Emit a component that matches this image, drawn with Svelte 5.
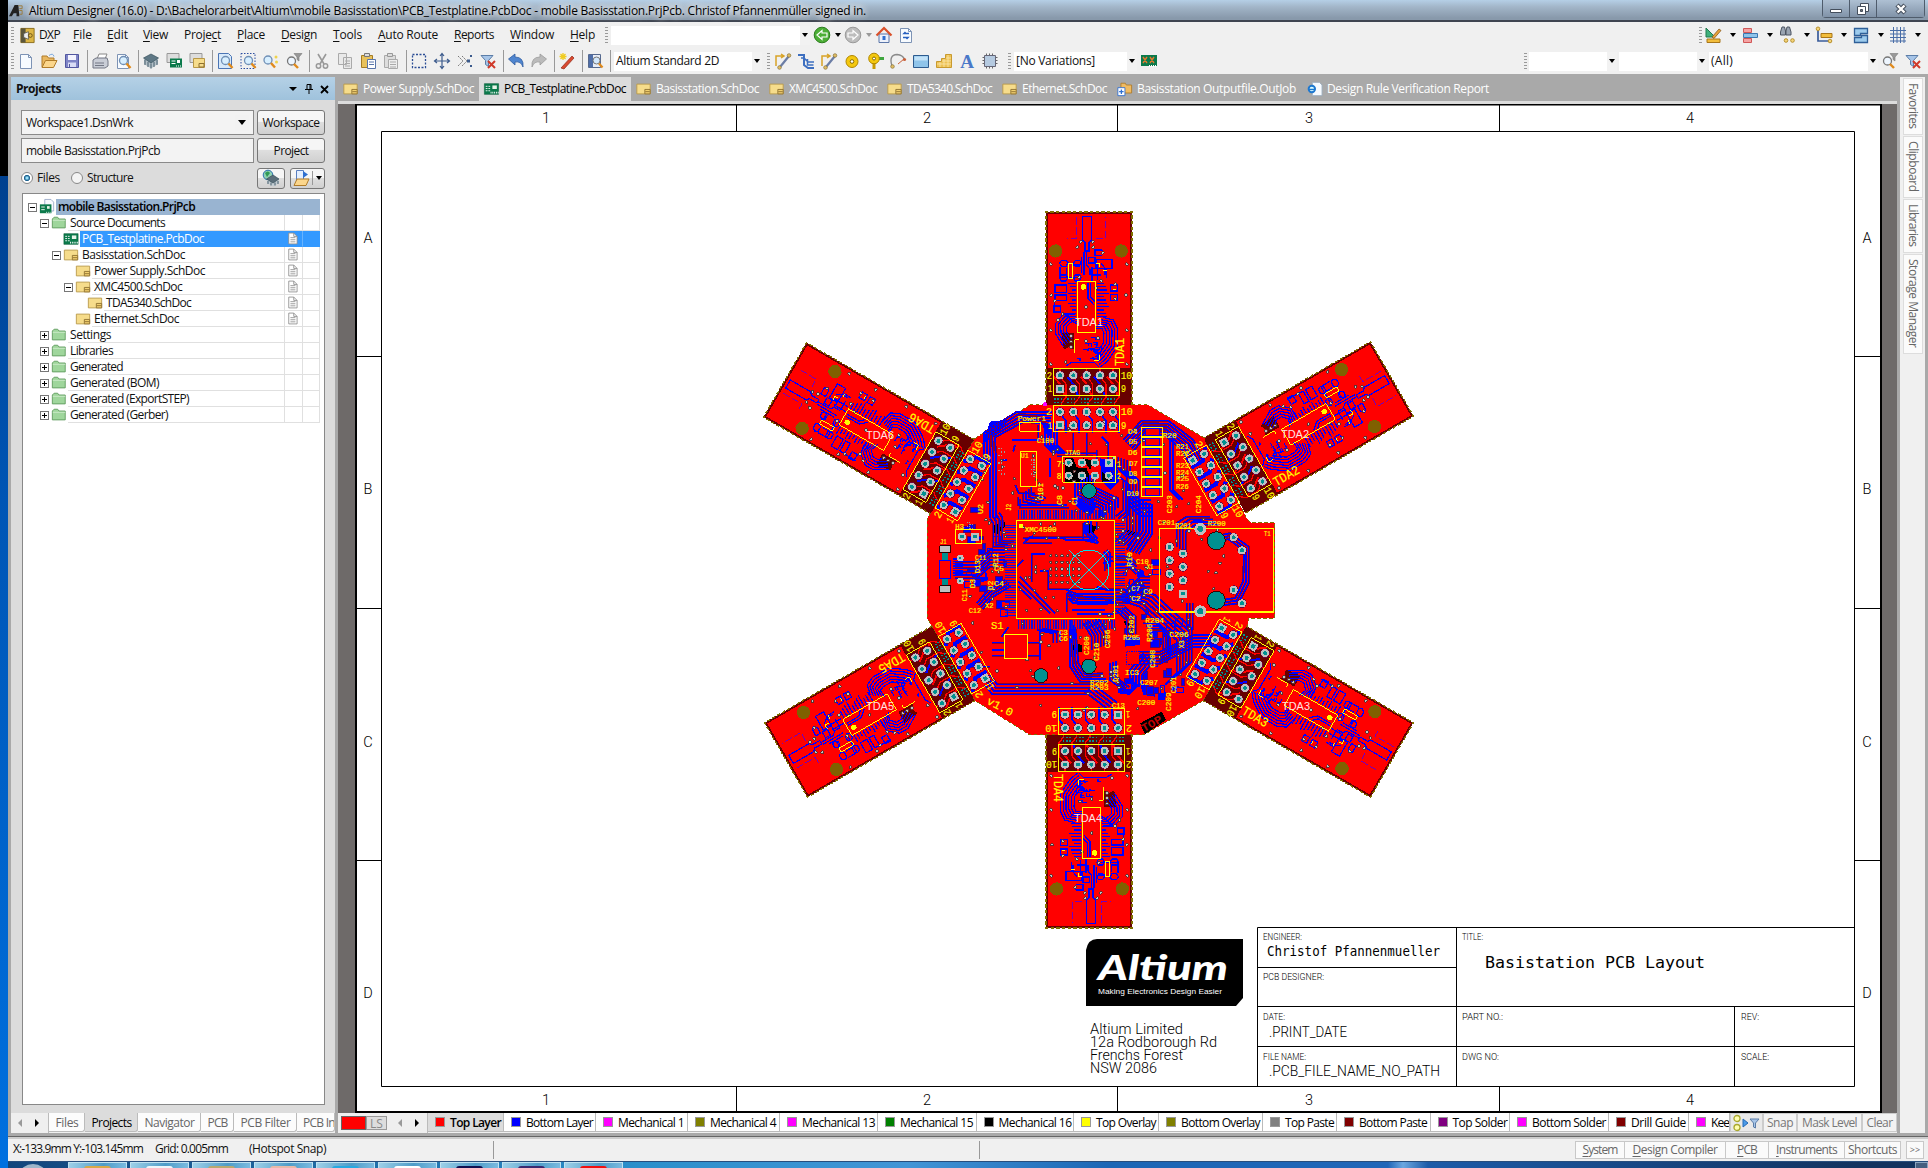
<script>
  // Spreads a label over a given width by adjusting its letter spacing.
  function fit(node, width) {
    if (!width) return;
    const natural = node.getBoundingClientRect().width;
    const count = Math.max(1, node.textContent.trim().length);
    node.style.letterSpacing = `${(width - natural) / count}px`;
  }

  const sch = '<path d="M1.500 3.500h15v11h-15z" fill="#f6dc8b" stroke="#b89848"/><path d="M10.500 9.500h6v5h-6zM11 12h5" fill="#f1d070" stroke="#8d7030"/>';
  const pcb = '<path d="M1 3h16v12H1z" fill="#0b7a4b" stroke="#055b36" stroke-width=".6"/><path d="M2.500 6h5M2.500 8.500h5M2.500 11h5" stroke="#fff" stroke-dasharray="2 1"/><path d="M10 5h5v4h-5z" fill="#e8f4e8"/><path d="M8 13h9" stroke="#fff" stroke-width="2" stroke-dasharray="1 1"/>';
  const page = '<path d="M3.500 2.500h8l3 3v11h-11z" fill="#f7fbff" stroke="#7d93b5"/><path d="M11.500 2.500v3h3" fill="none" stroke="#7d93b5"/>';
  const lens = '<circle cx="9.500" cy="8.500" r="4" fill="#d8efff" stroke="#6f8fb5" stroke-width="1.300"/><path d="M12.500 11.500l4 4.500" stroke="#e08a1c" stroke-width="2.400"/>';
  const funnel = '<path d="M9 1.500h8l-3 3.500v4l-2-1.500V5z" fill="#999" stroke="#777" stroke-width=".6"/>';
  const track = '<path d="M2 14V4h7M7 2l3 2-3 2" fill="none" stroke="#d8a326" stroke-width="1.500"/><path d="M6 15L15 4" stroke="#6b7da5" stroke-width="2.200"/><circle cx="15" cy="3.500" r="1.800" fill="#e0bd62" stroke="#88713a" stroke-width=".7"/><circle cx="5.500" cy="15.500" r="1.800" fill="#e0bd62" stroke="#88713a" stroke-width=".7"/>';
  const blueFunnel = '<path d="M2 3.500h12l-4.500 5v6l-3-2v-4z" fill="#a7c5e8" stroke="#5b7da8"/>';

  const icons = {
    sch, pcb, page,
    dxp: '<path d="M2 1.500h14v15H2z" fill="#dcb544" stroke="#8b6d1d"/><path d="M2 1.500h5v15H2z" fill="#5b563c"/><path d="M5 7l5-2v8l-5-2z" fill="#eee" stroke="#444" stroke-width=".7"/><circle cx="12" cy="9" r="2" fill="none" stroke="#6b5214"/>',
    open: '<path d="M2 15V4h5l1.500 2H14v3" fill="#e9b75f" stroke="#b07c2a"/><path d="M2 15.500l3.500-7H17l-3.500 7z" fill="#fbd68c" stroke="#b07c2a"/><path d="M9 3.500q4-3 5 1" stroke="#7aa8dd" fill="none"/>',
    save: '<path d="M2.500 2.500h13v13h-13z" fill="#7f84c6" stroke="#5257a0"/><path d="M5 3h8v5H5z" fill="#f4f4ff"/><path d="M5 10.500h8V15H5z" fill="#d9dcf5"/><path d="M6.500 12v3" stroke="#5257a0"/>',
    print: '<path d="M6 7l2-5h8l-2 5z" fill="#fff" stroke="#888"/><path d="M2 8l3-2h11l1 3v5l-3 2H2z" fill="#c9cdd6" stroke="#727784"/><path d="M4 11h9M4 13.500h9" stroke="#727784"/>',
    preview: page + lens,
    chip: '<path d="M2 7v5l7 4.500 7-4.500V7z" fill="#b4c1c9"/><path d="M1.500 6L9 2l7.500 4L9 11z" fill="#5f7886" stroke="#37505c" stroke-width=".7"/><path d="M3 8v5M6 10v5M9 11.500v5M12 10v5M15 8v5" stroke="#465f6c"/>',
    pcbdoc: '<path d="M2 1.500h12v9H2z" fill="#ddd" stroke="#999"/><path d="M5 6.500h12v9H5z" fill="#0b7a4b"/><path d="M6.500 9h4M6.500 11.500h4" stroke="#fff"/><path d="M12 8h3v3h-3z" fill="#fff"/><path d="M11 14h6" stroke="#fff" stroke-dasharray="1 1"/>',
    schdoc: '<path d="M2 1.500h12v9H2z" fill="#ddd" stroke="#999"/><path d="M5.500 6.500h11v9h-11z" fill="#f6dc8b" stroke="#b89848"/><path d="M11 11.500h5v3.500h-5z" fill="none" stroke="#8d7030"/>',
    zoomdoc: '<path d="M2.500 1.500h10l3 3v12h-13z" fill="#d7e9fa" stroke="#4b75b5"/>' + lens,
    zoomarea: '<path d="M2 1.500h14v15H2z" fill="none" stroke="#2b4da0" stroke-dasharray="1.500 1.500"/>' + lens,
    zoomsel: '<circle cx="6" cy="8" r="4" fill="#d8efff" stroke="#6f8fb5" stroke-width="1.300"/><path d="M9 11l4 4.500" stroke="#e08a1c" stroke-width="2.400"/><circle cx="14" cy="5" r="1.500" fill="#eed34d"/><circle cx="14.500" cy="10" r="1.500" fill="#eed34d"/>',
    zoomfilter: '<circle cx="6.500" cy="9" r="4" fill="#eef6ff" stroke="#777" stroke-width="1.300"/><path d="M9 12l4 4" stroke="#e08a1c" stroke-width="2.400"/>' + funnel,
    cut: '<path d="M5 2l6 10M13 2L7 12" stroke="#999" stroke-width="1.600"/><circle cx="5.500" cy="14" r="2.200" fill="none" stroke="#999" stroke-width="1.500"/><circle cx="12.500" cy="14" r="2.200" fill="none" stroke="#999" stroke-width="1.500"/>',
    copy: '<path d="M2.500 1.500h8v11h-8zM7.500 5.500h8v11h-8z" fill="#e9e9e9" stroke="#aaa"/><path d="M9 9h5M9 11.500h5M9 14h5" stroke="#aaa"/>',
    paste: '<path d="M2.500 3.500h11v12h-11z" fill="#e8c25c" stroke="#a57c24"/><path d="M5.500 1.500h5v3h-5z" fill="#ddd" stroke="#777"/><path d="M8.500 7.500h8v9h-8z" fill="#fff" stroke="#5975a9"/><path d="M10 10h5M10 12.500h5" stroke="#5975a9"/>',
    pasteoff: '<path d="M2.500 3.500h11v12h-11z" fill="#ddd" stroke="#aaa"/><path d="M5.500 1.500h5v3h-5z" fill="#ddd" stroke="#999"/><path d="M6.500 7.500h9v9h-9z" fill="#eee" stroke="#aaa"/><path d="M8 10h6M8 12.500h6M8 15h6" stroke="#aaa"/>',
    select: '<path d="M2.500 2.500h13v13h-13z" fill="none" stroke="#2b4d95" stroke-width="1.300" stroke-dasharray="2 1.500"/>',
    move: '<path d="M9 2v14M2 9h14M7 4l2-2.500L11 4M7 14l2 2.500 2-2.500M4 7L1.500 9 4 11M14 7l2.500 2-2.500 2" fill="none" stroke="#3b5a8c" stroke-width="1.200"/>',
    desel: '<path d="M2 4l5 5-5 5M6 4l5 5-5 5" fill="none" stroke="#777" stroke-dasharray="2 1"/><path d="M11 7.500h3v3h-3zM14 3h2v2h-2zM14 13h2v2h-2z" fill="#3b5a8c"/>',
    clearf: blueFunnel + '<path d="M9 9l7 7M16 9l-7 7" stroke="#d03a2a" stroke-width="2"/>',
    undo: '<path d="M1.500 7L8 2v3q9 0 8 10-2-6-8-5v3z" fill="#4f85cf" stroke="#2d5b9f" stroke-width=".8"/>',
    redo: '<path d="M16.500 7L10 2v3Q1 5 2 15q2-6 8-5v3z" fill="#bbb" stroke="#999" stroke-width=".8"/>',
    wand: '<path d="M3 16L14 4l2 2L6 17z" fill="#d94a30" stroke="#8f2a18" stroke-width=".7"/><path d="M5 1v7M1.500 4.500h7M2.500 2l5 5M7.500 2l-5 5" stroke="#f0cc20" stroke-width="1.300"/>',
    book: '<path d="M2.500 2.500h12v13h-12z" fill="#e8edf6" stroke="#55698f"/><path d="M3 3h4v12H3z" fill="#4f6ea8"/><circle cx="10.500" cy="8.500" r="3.500" fill="#d3e8fc" stroke="#777"/><path d="M13 11.500l3.500 4" stroke="#e08a1c" stroke-width="2.200"/>',
    track,
    multi: '<path d="M1 3h6v10l4 3h6" fill="none" stroke="#3d6fc0" stroke-width="2"/><path d="M4 6h3l4 4h6M10.500 7v6h6" fill="none" stroke="#3d6fc0" stroke-width="1.500"/>',
    pad: '<circle cx="9" cy="9.500" r="6" fill="#f4c80f" stroke="#b08600"/><circle cx="9" cy="9.500" r="1.800" fill="#fff" stroke="#876800"/>',
    via: '<path d="M8 9v8" stroke="#c99b00" stroke-width="3"/><path d="M12 5h6v3h-6z" fill="#3fa63f"/><circle cx="8" cy="6.500" r="5.300" fill="#f4c80f" stroke="#b08600"/><circle cx="8" cy="6.500" r="1.500" fill="#fff" stroke="#876800"/>',
    arc: '<path d="M3 14Q-.500 3 8 2.500q6 .500 7.500 5" fill="none" stroke="#8a8a8a" stroke-width="1.400"/><path d="M9 12l6-5" stroke="#c9603a"/><circle cx="3.500" cy="14.500" r="1.800" fill="#e0bd62" stroke="#88713a" stroke-width=".7"/><circle cx="15.500" cy="7.500" r="1.600" fill="#c9603a"/>',
    fill: '<path d="M1.500 3.500h15v12h-15z" fill="#8fc4ea" stroke="#2d5b8f"/><path d="M2.500 4.500h13v4h-13z" fill="#c2e2f8"/>',
    poly: '<path d="M1.500 9.500h5v-3h4v-4h6v13h-15z" fill="#edc254" stroke="#c89a30"/><path d="M2 12h14M5 10v5M9 7v8M13 3v12M7 9h9M11 6h5" stroke="#fbe7ad" stroke-width=".8"/>',
    chip2: '<path d="M1.500 5.500h15M1.500 8.500h15M1.500 11.500h15M5.500 1.500v15M8.500 1.500v15M11.500 1.500v15" stroke="#666"/><path d="M3.500 3.500h11v11h-11z" fill="#b5cae0" stroke="#667"/>',
    vari: '<path d="M1 3h16v11H1z" fill="#0b7a4b"/><path d="M3 5l4 6M7 5l-4 6M10 5l4 6M14 5l-4 6" stroke="#e07a30" stroke-width="1.400"/><path d="M9 14h8" stroke="#fff" stroke-width="2" stroke-dasharray="1 1"/>',
    back: '<circle cx="9" cy="9" r="7.800" fill="#4cae36" stroke="#2c7d1e"/><path d="M4 9l5-4.500V7h5v4H9v2.500z" fill="#4cae36" stroke="#fff" stroke-width="1.200"/>',
    fwd: '<circle cx="9" cy="9" r="7.800" fill="#bdbdbd" stroke="#999"/><path d="M14 9L9 4.500V7H4v4h5v2.500z" fill="#bdbdbd" stroke="#fff" stroke-width="1.200"/>',
    home: '<path d="M4 8h10v8.500H4z" fill="#eef2fb" stroke="#5b76a8"/><path d="M1.500 9.500L9 2l7.500 7.500" fill="none" stroke="#d9502a" stroke-width="2.200"/><path d="M7.500 10h3v4h-3z" fill="#2f6fd0"/>',
    refresh: page + '<path d="M12 7.500H7l1.500-1.500M6 11.500h5L9.500 13" stroke="#2660c0" stroke-width="1.500" fill="none"/>',
    ruler: '<path d="M2 2l9 9H2z" fill="#3fb07c" stroke="#207a4e"/><path d="M3 13h13v3.500H3z" fill="#f2bd3c" stroke="#a8761a"/><path d="M8 11l7-8 2 1.500-7 8z" fill="#e8a33a" stroke="#7c4d12" stroke-width=".7"/>',
    align: '<path d="M2.500 2.500h8v4h-8zM2.500 12.500h8v4h-8z" fill="#f5a3a3" stroke="#d05858"/><path d="M2.500 7.500h14v4h-14z" fill="#8fc4ea" stroke="#3c78b0"/>',
    find: '<path d="M4 1h2.500l1 4v4h-5V6zM9 1h2.500L13 6v3H8V5z" fill="#9aa4b2" stroke="#4d5562"/><circle cx="8" cy="14.500" r="1.800" fill="#f4d47a" stroke="#b8902c"/><circle cx="14.500" cy="14.500" r="1.800" fill="#f4d47a" stroke="#b8902c"/>',
    dim: '<path d="M3 3v12h12" fill="none" stroke="#3a5c9a" stroke-width="1.700"/><circle cx="3" cy="2.800" r="1.800" fill="#f4d47a" stroke="#b8902c"/><circle cx="15" cy="15" r="1.800" fill="#f4d47a" stroke="#b8902c"/><path d="M6 7.500h11v4H6z" fill="#f2bd3c" stroke="#a8761a"/>',
    room: '<path d="M2.500 2.500h13v5h-7v2h7v7h-13v-5h7v-2h-7z" fill="#9dcbed" stroke="#2f5f98" stroke-width="1.300"/>',
    grid: '<path d="M1 4.500h16M1 8h16M1 11.500h16M1 15h16M4.500 1v16M8 1v16M11.500 1v16M15 1v16" stroke="#4a6ea8"/>',
    out: '<path d="M5 2.500h5l1 2h6v9H5z" fill="#f0bb62" stroke="#b07c2a"/><path d="M1.500 7.500h8v9h-8z" fill="#fff" stroke="#2f6fd0"/><path d="M5.500 9.500v5M3 12h5" stroke="#2f6fd0" stroke-width="1.500"/>',
    ie: '<path d="M6.500 1.500h8l3 3v12h-11z" fill="#f7fbff" stroke="#9ab"/><circle cx="6" cy="9" r="3.600" fill="#dff" stroke="#1e78d0" stroke-width="2.200"/><path d="M2.500 9.500h7" stroke="#1e78d0" stroke-width="1.600"/>',
    folder: '<path d="M1.500 14.500v-10l2-2h4l1.500 2h7v10z" fill="#9fd69c" stroke="#5f9a5c"/><path d="M2 6h14" stroke="#cdeccb"/>',
    project: '<path d="M6.500.5h7l3 3v10h-10z" fill="#f7faff" stroke="#99a9c8"/><path d="M1 6h13v10H1z" fill="#0b7a4b"/><path d="M2.500 9h4M2.500 12h4" stroke="#fff"/><path d="M9 8h3v3H9z" fill="#e8f4e8"/><path d="M8 15h6" stroke="#fff" stroke-dasharray="1 1"/>',
    sheet: '<path d="M4.500 2.500h6l4 4v9h-10z" fill="#fff" stroke="#8a8a8a"/><path d="M10.500 2.500v4h4M6.500 8h6M6.500 10.500h6M6.500 13h6" fill="none" stroke="#8a8a8a"/>',
    compile: '<circle cx="6" cy="6" r="4.800" fill="#8fd0b0" stroke="#2a6fb0"/><path d="M3 4q3-3 5 0l-3 4z" fill="#2f9a55"/><path d="M5 11v3l6.500 3.500 5.500-3.500v-3z" fill="#c3cdd3"/><path d="M4.500 10L11 6l6 4-6 4z" fill="#5b6e7a" stroke="#37505c" stroke-width=".7"/><path d="M6 12v3M9 13.500v3M13 13.500v3M16 12v3" stroke="#465f6c"/>',
    explore: '<path d="M3.500 1.500h7v12h-7z" fill="#e4efff" stroke="#5b7fc0"/><path d="M10 2l5 3.500L10 9z" fill="#2f6fd0"/><path d="M1 16.500l3-6.500h12l-3 6.500z" fill="#fbd68c" stroke="#b07c2a"/>'
  };

  const menus = [
    ['D', 'X', 'P', 21, 34], ['', 'F', 'ile', 19, 34], ['', 'E', 'dit', 21, 36], ['', 'V', 'iew', 25, 41],
    ['Proje', 'c', 't', 37, 53], ['', 'P', 'lace', 28, 44], ['', 'D', 'esign', 36, 52], ['', 'T', 'ools', 29, 45],
    ['', 'A', 'uto Route', 60, 76], ['', 'R', 'eports', 40, 56], ['', 'W', 'indow', 44, 60], ['', 'H', 'elp', 25, 35]
  ];
  const toolGroups = [
    ['page', 'open', 'save'], ['print', 'preview'], ['chip', 'pcbdoc', 'schdoc'],
    ['zoomdoc', 'zoomarea', 'zoomsel', 'zoomfilter'], ['cut', 'copy', 'paste', 'pasteoff'],
    ['select', 'move', 'desel', 'clearf'], ['undo', 'redo'], ['wand'], ['book']
  ];
  const placeTools = ['track', 'multi', 'track', 'pad', 'via', 'arc', 'fill', 'poly', 'letter', 'chip2'];
  const utilities = ['ruler', 'align', 'find', 'dim', 'room', 'grid'];
  const docTabs = [
    ['sch', 'Power Supply.SchDoc', 111, 137], ['pcb', 'PCB_Testplatine.PcbDoc', 122, 152],
    ['sch', 'Basisstation.SchDoc', 103, 133], ['sch', 'XMC4500.SchDoc', 88, 118], ['sch', 'TDA5340.SchDoc', 85, 115],
    ['sch', 'Ethernet.SchDoc', 85, 115], ['out', 'Basisstation Outputfile.OutJob', 159, 190], ['ie', 'Design Rule Verification Report', 162, 192]
  ];
  const tree = [
    [0, '-', 'project', 'mobile Basisstation.PrjPcb', 137], [1, '-', 'folder', 'Source Documents', 95],
    [2, '', 'pcb', 'PCB_Testplatine.PcbDoc', 122], [2, '-', 'sch', 'Basisstation.SchDoc', 103],
    [3, '', 'sch', 'Power Supply.SchDoc', 111], [3, '-', 'sch', 'XMC4500.SchDoc', 88],
    [4, '', 'sch', 'TDA5340.SchDoc', 85], [3, '', 'sch', 'Ethernet.SchDoc', 85],
    [1, '+', 'folder', 'Settings', 41], [1, '+', 'folder', 'Libraries', 43], [1, '+', 'folder', 'Generated', 53],
    [1, '+', 'folder', 'Generated (BOM)', 89], [1, '+', 'folder', 'Generated (ExportSTEP)', 119], [1, '+', 'folder', 'Generated (Gerber)', 98]
  ];
  const panelTabs = [['Files', 23, 36], ['Projects', 40, 53], ['Navigator', 50, 63], ['PCB', 20, 33], ['PCB Filter', 50, 63], ['PCB In', 32, 38]];
  const layers = [
    ['Top Layer', '#f00', 51, 76], ['Bottom Layer', '#00f', 67, 92], ['Mechanical 1', '#f0f', 66, 92],
    ['Mechanical 4', '#808000', 66, 92], ['Mechanical 13', '#f0f', 73, 98], ['Mechanical 15', '#008000', 73, 98.500],
    ['Mechanical 16', '#000', 73, 97.500], ['Top Overlay', '#ff0', 60, 85], ['Bottom Overlay', '#808000', 79, 104],
    ['Top Paste', '#808080', 49, 74], ['Bottom Paste', '#800000', 68, 93.500], ['Top Solder', '#800080', 55, 79.500],
    ['Bottom Solder', '#f0f', 74, 99], ['Drill Guide', '#800000', 55, 80], ['Kee', '#f0f', 18, 41]
  ];
  const buttons = [['S', 'ystem', 35, 50], ['D', 'esign Compiler', 85, 101], ['P', 'CB', 20, 43], ['I', 'nstruments', 61, 76], ['', 'Shortcuts', 49, 56]];
  const sideTabs = [['Favorites', 46, 57], ['Clipboard', 51, 62], ['Libraries', 43, 54], ['Storage Manager', 89, 100]];
  const taskColors = ['#d8a848', '#eef6fa', '#b8a870', '#e9b9a8', '#28a8e0', '#ffffff', '#101050', '#3a2a70', '#f01010'];

  // ----- sheet frame -----
  const sheetText = [
    [1263, 940, 'ENGINEER:', 39, 9], [1267, 956, 'Christof Pfannenmueller', 173, 13.500, 'bold'], [1462, 940, 'TITLE:', 21, 9],
    [1485, 968, 'Basistation PCB Layout', 220, 16, 'bold'], [1263, 980, 'PCB DESIGNER:', 61, 9],
    [1263, 1020, 'DATE:', 22, 9], [1269, 1037, '.PRINT_DATE', 78, 15], [1263, 1060, 'FILE NAME:', 43, 9],
    [1269, 1076, '.PCB_FILE_NAME_NO_PATH', 171, 15], [1462, 1020, 'PART NO.:', 41, 9], [1462, 1060, 'DWG NO:', 37, 9],
    [1741, 1020, 'REV:', 18, 9], [1741, 1060, 'SCALE:', 28, 9],
    [1090, 1034, 'Altium Limited', 93, 14], [1090, 1047, '12a Rodborough Rd', 127, 14],
    [1090, 1060, 'Frenchs Forest', 93, 14], [1090, 1073, 'NSW 2086', 67, 14]
  ];
  const colMarks = [[546, '1'], [927, '2'], [1309, '3'], [1690, '4']];
  const rowMarks = [[238, 'A'], [489, 'B'], [742, 'C'], [993, 'D']];

  // ----- board -----
  const range = (n) => Array.from({ length: n }, (_, i) => i);
  let seed = 7;
  const rnd = () => ((seed = (seed * 16807) % 2147483647) / 2147483647);
  // n parallel tracks, each shifted by (dx, dy)
  const bundle = (pts, n, dx, dy) =>
    range(n).map((i) => 'M' + pts.map(([x, y]) => `${x + dx * i} ${y + dy * i}`).join('L')).join('');
  // n nested tracks, each a step closer to (cx, cy)
  const nest = (pts, n, step, cx, cy) =>
    range(n).map((i) => 'M' + pts.map(([x, y]) => {
      const d = Math.hypot(cx - x, cy - y);
      return `${(x + ((cx - x) / d) * step * i).toFixed(1)} ${(y + ((cy - y) / d) * step * i).toFixed(1)}`;
    }).join('L')).join('');

  const arms = [
    [1089, 212, 0], [1392, 379, 60], [1392, 760, 120], [1089, 928, 180], [786, 760, 240], [785, 380, 300]
  ];
  const armLabels = [[1075, 326, 'TDA1'], [1281, 438, 'TDA2'], [1282, 710, 'TDA3'], [1074, 822, 'TDA4'], [866, 710, 'TDA5'], [866, 439, 'TDA6']];
  const armTraces =
    'M187 50h28v70l-8 8v25h-12v-25l-8-8zM192 155v70M200 155v40l10 12v18M205 172h20v17h-20zM225 150h20l8 8-8 8h-20zM228 178h48v28h-48zM232 190v50M244 190l16 22v22M255 206v20M120 200v30M160 195h20M122 232h60M140 205v24M184 170v50M212 205h24M212 225h30M216 200v45M204 250v45l18 20M211 250v40l14 14' +
    'M124 181h14l6 7-6 11h-14l-5-9zM166 181h12l6 7-6 11h-12l-5-9zM124 225h14l6 7-6 11h-14l-5-9zM166 225h12l6 7-6 11h-12l-5-9z' +
    nest([[248, 352], [280, 360], [292, 385], [292, 440], [262, 484], [240, 502]], 6, 8.500, 205, 415) +
    nest([[165, 342], [130, 342], [106, 372], [106, 400], [130, 440]], 5, 8.500, 185, 390) +
    range(11).map((i) => `M${145 + (i % 3) * 5} ${250 + i * 10}H168M230 ${250 + i * 10}h${22 + (i % 4) * 5}`).join('') +
    'M105 255h35v22h-35zM105 285h35v16h-35zM100 318h22v18h-22zM272 255h20v18h-20zM272 283h20v18h-20zM104 300v40M138 498l16-10h70l14 14' +
    range(18).map(() => { const x = 170 + rnd() * 62, y = 410 + rnd() * 72; return `M${x | 0} ${y | 0}h${(6 + rnd() * 14) | 0}v${(5 + rnd() * 8) | 0}`; }).join('');
  const armVias = [[182, 125], [218, 125], [172, 142], [220, 142], [92, 193], [320, 193], [178, 232], [248, 158], [244, 242], [94, 286], [318, 286], [104, 302], [228, 265], [286, 253], [286, 296], [199, 321], [128, 342], [115, 360], [92, 391], [320, 391], [234, 415], [199, 423], [153, 409], [153, 425], [153, 441], [92, 493], [320, 493], [137, 486]];
  const armPins = [120, 160, 200, 240, 279];

  const outline = '360,45 715,45 885,145 1010,385 1022,398 1094,398 1094,685 1015,685 1015,700 880,932 700,1035 360,1035 195,932 52,685 52,385 195,145';
  const chipTraces =
    'M340 460l20-18h200M345 450l24-12M320 530l20-20M365 577v-85h40M340 445h120l8 5h90l8 10M345 460h80M330 560l105 110M325 575l95 95M325 590l40 38M390 543h25v55h220M470 610v55M480 615l120 15M485 660h100M500 643h90l15-15M520 640h110M475 625l14 14h95M500 672h110M520 400v50l45 10M530 400v35l25 20M560 395v25M590 500h20M580 520l30-8M560 590l30 10h30' +
    bundle([[470, 600], [500, 612], [612, 612]], 4, 2, 8) + bundle([[590, 480], [600, 490], [600, 530]], 3, -8, 6) + bundle([[525, 395], [525, 430], [545, 450]], 3, 9, -2);
  const boardTraces =
    nest([[425, 66], [320, 66], [222, 128], [222, 215]], 5, 9, 420, 210) +
    bundle([[405, 100], [405, 165], [430, 190]], 5, 9, 0) +
    'M440 190h120M440 199h110M490 130v60M530 130v70M560 180v30M575 140l20 20v50' +
    nest([[640, 150], [695, 92], [775, 92], [850, 150], [880, 205]], 6, 9, 740, 250) +
    bundle([[625, 200], [625, 235], [650, 260], [650, 420], [617, 455]], 5, 9, 3) +
    bundle([[660, 300], [690, 330], [722, 330]], 5, 0, 12) +
    bundle([[690, 330], [690, 420], [650, 480]], 5, 9, 3) +
    bundle([[617, 380], [640, 360], [640, 270], [600, 240]], 3, 8, 6) +
    bundle([[495, 280], [495, 320], [570, 355], [570, 385]], 7, 9, -5) +
    bundle([[240, 190], [240, 385]], 3, 9, 0) +
    bundle([[240, 385], [250, 400], [250, 470], [285, 470]], 4, 9, -6) +
    bundle([[340, 310], [340, 335], [385, 345]], 4, 8, -7) +
    bundle([[325, 320], [325, 345], [470, 345]], 2, 6, 8) +
    bundle([[240, 855], [262, 883], [550, 883]], 4, -5, 10) +
    nest([[480, 690], [480, 830], [510, 875], [590, 875]], 4, 9, 560, 800) +
    bundle([[520, 700], [545, 740], [545, 780]], 6, 9, -3) +
    bundle([[135, 515], [200, 515], [240, 480], [285, 480]], 6, 0, 10) +
    bundle([[200, 640], [235, 600], [285, 570]], 4, 6, 6) +
    bundle([[617, 625], [690, 650], [800, 750], [800, 850], [765, 885]], 6, 9, -7) +
    bundle([[690, 785], [750, 785], [850, 735], [905, 735]], 5, 0, 9) +
    bundle([[617, 600], [650, 600], [690, 560], [720, 560]], 5, 0, 10) +
    bundle([[617, 500], [660, 500], [680, 520]], 4, 0, 11) +
    bundle([[617, 660], [650, 690], [650, 740]], 4, 9, -3) +
    bundle([[700, 790], [660, 840], [660, 880]], 5, 9, 4) +
    bundle([[600, 820], [600, 870], [640, 900]], 3, 9, -4) +
    bundle([[700, 700], [740, 700], [760, 720], [760, 780]], 4, 7, 8) +
    nest([[905, 440], [960, 430], [1016, 470], [1016, 580], [985, 640], [905, 650]], 3, 9, 930, 540) +
    bundle([[800, 470], [800, 400], [830, 380], [900, 380]], 4, 9, 8) +
    bundle([[780, 130], [780, 300], [810, 330]], 2, 9, 0) +
    bundle([[380, 720], [430, 730], [430, 760]], 3, 10, -2) +
    bundle([[525, 905], [590, 955]], 4, 10, -6) +
    bundle([[830, 640], [830, 720]], 3, 9, 0) +
    'M170 830h70M245 758h36M245 797h36M245 780h36M355 758h34M355 797h34M390 720v90M305 150h50M315 165l-5 20M316 285l10 25h50M385 105v45h-40M290 210h-20M420 205v55M275 740l20-28';
  const blobs = '570,205 618,212 628,275 600,300 575,275|240,95 300,88 262,130 215,165|655,575 700,580 715,600 690,640 660,630|645,740 690,740 690,765 645,770|620,880 660,870 690,885 660,915 625,910|680,535 700,540 705,560 680,560|195,540 225,530 235,570 205,580|490,330 545,320 560,350 540,380 500,350|770,770 800,765 805,790 775,800|650,490 672,520 655,540|395,95 420,100 425,140 405,130|840,378 890,380 880,395 850,395|690,880 730,890 735,920 700,915|745,910 770,905 765,930 745,930|730,740 760,745 750,775 735,770';
  const blacks = '466,205 490,205 500,232 530,235 545,275 466,275|520,205 550,212 540,240|575,245 608,270 575,275|650,420 690,430 690,440 655,435|525,398 560,410 550,430 525,425|487,755 515,765 515,785 490,785|250,405 285,395 285,410 255,440|640,690 660,700 650,715|690,1000 755,965 768,990 705,1032';
  const boardVias = [
    ...range(190).map(() => {
      const a = rnd() * 6.283, r = 130 + rnd() * 330;
      return [Math.round(530 + Math.cos(a) * r * 0.9), Math.round(540 + Math.sin(a) * r)];
    }),
    ...range(30).map((i) => [422 + (i % 6) * 17, 497 + Math.floor(i / 6) * 20])
  ];
  const parts = range(70).map(() => {
    const right = rnd() > 0.35;
    return [right ? 640 + rnd() * 190 : 160 + rnd() * 120, right ? 500 + rnd() * 400 : 340 + rnd() * 320, 8 + rnd() * 20, 8 + rnd() * 16];
  }).filter(([x, y]) => !(x > 735 && y < 670));
  const holes = [[537, 303, 22], [393, 857, 21], [537, 829, 22], [919, 452, 27], [919, 631, 27]];
  const rings = [[871, 417], [871, 664]];
  const jackPins = [[779, 471], [819, 491], [779, 511], [819, 531], [779, 551], [819, 571], [779, 591], [971, 442], [996, 481], [971, 600], [996, 640]];
  const silk = [
    [323, 92, 'Power1', 85], [380, 160, 'C100', 52], [464, 194, 'JTAG', 46], [332, 204, 'U1', 24], [440, 230, '7', 14, 28], [440, 268, '8', 14, 28], [621, 230, '1', 12, 28], [621, 268, '2', 12, 28],
    [654, 131, 'D4', 28], [656, 163, 'D5', 26], [654, 194, 'D6', 28], [656, 227, 'D7', 28], [656, 257, 'D8', 26], [656, 282, 'D9', 26], [650, 317, 'D10', 36],
    [758, 143, 'R20', 42], [798, 178, 'R21', 38], [798, 197, 'R22', 40], [798, 234, 'R23', 40], [798, 254, 'R24', 40], [798, 274, 'R25', 40], [798, 296, 'R26', 38],
    [344, 427, 'XMC4500', 96], [136, 418, 'H3', 26], [90, 461, 'J1', 20], [743, 404, 'C201', 52], [796, 414, 'R201', 48], [893, 407, 'R200', 54], [1062, 437, 'T1', 20],
    [195, 510, 'C11', 34], [252, 543, 'C5', 30], [252, 587, 'C4', 30], [176, 668, 'C12', 38], [225, 655, 'X2', 26], [678, 521, 'C10', 38], [710, 536, 'X1', 20],
    [664, 604, 'C7', 26], [700, 613, 'C9', 28], [664, 633, 'C2', 28], [706, 698, 'R204', 56], [778, 741, 'C206', 58], [640, 750, 'R205', 50], [446, 736, 'C3', 28], [446, 752, 'C6', 28],
    [645, 856, 'IC3', 42], [540, 884, 'R202', 56], [540, 900, 'R203', 56], [690, 884, 'C207', 54], [682, 944, 'C200', 54], [605, 955, 'C13', 40], [243, 716, 'S1', 38, 32]
  ];
  const silkV = [
    [399, 330, 'C101', 50], [455, 345, 'C8', 30], [501, 345, 'C1', 26], [787, 370, 'C203', 54], [873, 370, 'C204', 54], [219, 372, 'U2', 30], [303, 362, 'J2', 20],
    [264, 530, 'R12', 40], [209, 550, 'D13', 40], [196, 595, 'D3', 28], [250, 600, 'D2', 28], [172, 634, 'C11', 36], [666, 530, 'R10', 44], [600, 775, 'C206', 56],
    [536, 795, 'C200', 56], [566, 812, 'C210', 54], [673, 730, 'C202', 54], [726, 755, 'R206', 54], [734, 833, 'C208', 54], [822, 775, 'X3', 24], [624, 875, 'D201', 50], [797, 910, 'C201', 50], [783, 963, 'C209', 56]
  ];
</script>

{#snippet icon(name)}
  <svg class="icon" viewBox="0 0 18 18" aria-hidden="true">
    {#if name === 'letter'}
      <text x="9" y="16" text-anchor="middle" class="letter">A</text>
    {:else}
      {@html icons[name]}
    {/if}
  </svg>
{/snippet}

{#snippet combo(cls, text, width)}
  <div class="combo {cls}">{#if text}<span use:fit={width}>{text}</span>{/if}<i class="drop"><b></b></i></div>
{/snippet}

<div class="screen">
  <div class="desktop"></div>
  <main class="app">
    <header class="titlebar">
      <svg class="logo" viewBox="0 0 16 16"><path d="M0 14L6 2h4l1 12H8v-3H5l-2 3z" fill="#222" /><path d="M10 3h4v3h-3M11 8h3v4h-3" fill="none" stroke="#9a7b3c" /></svg>
      <h1 use:fit={837}>Altium Designer (16.0) - D:\Bachelorarbeit\Altium\mobile Basisstation\PCB_Testplatine.PcbDoc - mobile Basisstation.PrjPcb. Christof Pfannenmüller signed in.</h1>
      <div class="winbtns">
        <span><svg viewBox="0 0 14 12"><path d="M1.500 6.500h11v3h-11z" fill="#fff" stroke="#444e5c" /></svg></span>
        <span><svg viewBox="0 0 14 12"><path d="M4.500.5h8v8h-8z" fill="#fff" stroke="#444e5c" /><path d="M1.500 3.500h8v8h-8z" fill="#fff" stroke="#444e5c" /><path d="M4.500 6.500h2v2h-2z" fill="#777" stroke="#444e5c" /></svg></span>
        <span class="close"><svg viewBox="0 0 14 12"><path d="M3 2l8 8M11 2l-8 8" stroke="#444e5c" stroke-width="4.500" /><path d="M3.500 2.500l7 7M10.500 2.500l-7 7" stroke="#fff" stroke-width="2.400" /></svg></span>
      </div>
    </header>

    <nav class="bar menubar">
      <i class="grip"></i>
      <span class="dxp">{@render icon('dxp')}</span>
      {#each menus as [a, u, b, w, cell]}
        <span class="menu" style:width="{cell}px"><span use:fit={w}>{a}<u>{u}</u>{b}</span></span>
      {/each}
      <i class="grip wide"></i>
      {@render combo('address', '', 0)}
      <span class="nav">{@render icon('back')}<b class="tri"></b>{@render icon('fwd')}<b class="tri dim"></b>{@render icon('home')}{@render icon('refresh')}</span>
      <span class="utils">
        <i class="grip"></i>
        {#each utilities as name}<span class="util">{@render icon(name)}<b class="tri"></b></span>{/each}
      </span>
    </nav>

    <div class="bar toolbar">
      <i class="grip"></i>
      {#each toolGroups as group}
        <span class="group">{#each group as name}<span class="tool">{@render icon(name)}</span>{/each}</span>
      {/each}
      {@render combo('view', 'Altium Standard 2D', 103)}
      <i class="grip wide first"></i>
      {#each placeTools as name}<span class="tool">{@render icon(name)}</span>{/each}
      <i class="grip wide second"></i>
      {@render combo('variation', '[No Variations]', 79)}
      <span class="tool">{@render icon('vari')}</span>
      <span class="filter">
        <i class="grip"></i>
        {@render combo('f1', '', 0)}
        {@render combo('f1', '', 0)}
        {@render combo('f2', '(All)', 22)}
        <span class="tool">{@render icon('zoomfilter')}</span>
        <span class="tool">{@render icon('clearf')}</span>
      </span>
    </div>

    <div class="work">
      <aside class="panel">
        <div class="phead"><strong use:fit={45}>Projects</strong><span><b class="tri big"></b><svg viewBox="0 0 9 10"><path d="M3 .5h4v5H3zM1 5.500h8M5 6v4M6 1v4" fill="none" stroke="#000" /></svg><svg viewBox="0 0 9 10"><path d="M1 2l7 7M8 2L1 9" stroke="#000" stroke-width="1.800" /></svg></span></div>
        <div class="form">
          <div class="line"><div class="field"><span use:fit={107}>Workspace1.DsnWrk</span><i class="drop"><b></b></i></div><button><span use:fit={57}>Workspace</span></button></div>
          <div class="line"><div class="field"><span use:fit={134}>mobile Basisstation.PrjPcb</span></div><button><span use:fit={35}>Project</span></button></div>
          <div class="line modes">
            <i class="radio on"></i><span use:fit={23}>Files</span><i class="radio second"></i><span use:fit={46}>Structure</span>
            <button class="sm">{@render icon('compile')}</button>
            <button class="sm split">{@render icon('explore')}<em></em><b class="tri"></b></button>
          </div>
        </div>
        <div class="tree">
          {#each tree as [level, sign, ic, label, w], i}
            <div class="row" class:root={i === 0} class:selected={i === 2} style:padding-left="{5 + level * 12}px">
              <i class="exp" class:none={!sign} class:plus={sign === '+'}></i>
              {@render icon(ic)}
              <span class="cell"><span use:fit={w}>{label}</span></span>
              {#if i > 0}<span class="col">{#if i > 1 && i < 8}{@render icon('sheet')}{/if}</span><span class="col last"></span>{/if}
            </div>
          {/each}
        </div>
        <div class="ptabs">
          <span class="arrows"><b class="larr"></b><b class="rarr"></b></span>
          {#each panelTabs as [t, w, cell], i}<span class="ptab" class:active={i === 1} style:width="{cell}px"><span use:fit={w}>{t}</span></span>{/each}
        </div>
      </aside>

      <section class="editor">
        <div class="doctabs">
          {#each docTabs as [ic, t, w, cell], i}
            <span class="dtab" class:active={i === 1} style:width="{cell}px">{@render icon(ic)}<span use:fit={w}>{t}</span></span>
          {/each}
        </div>
        <div class="canvas">
          <svg class="sheet" viewBox="355 104 1527 1009">
            <path d="M355 104h1527v1009H355z" fill="#fff" />
            <path d="M356 1113V104.500h1525V1113M355 1112h1527" fill="none" stroke="#000" stroke-width="2" />
            <path class="frame" d="M381.500 131.500h1473v955h-1473zM736.500 104v27M1117.500 104v27M1499.500 104v27M736.500 1086v27M1117.500 1086v27M1499.500 1086v27M355 356.500h26M355 608.500h26M355 860.500h26M1855 356.500h26M1855 608.500h26M1855 860.500h26M1855 927.500H1257.500v159M1456.500 927.500v159M1257.500 967.500h199M1257.500 1006.500h597M1257.500 1046.500h597M1734.500 1006.500v80" />
            {#each colMarks as [x, t]}<text class="mark" {x} y="123">{t}</text><text class="mark" {x} y="1105">{t}</text>{/each}
            {#each rowMarks as [y, t]}<text class="mark" x="368" y={y + 5}>{t}</text><text class="mark" x="1867" y={y + 5}>{t}</text>{/each}
            {#each sheetText as [x, y, t, w, size, weight]}
              <text class="note" class:heavy={weight} {x} {y} font-size={size} textLength={w} lengthAdjust="spacingAndGlyphs">{t}</text>
            {/each}
            <path d="M1086 950q2-11 11-11h146v59l-7 8h-150z" />
            <text class="brand" x="1098" y="980" textLength="130" lengthAdjust="spacingAndGlyphs">Altium</text>
            <text class="tag" x="1098" y="994" textLength="124" lengthAdjust="spacingAndGlyphs">Making Electronics Design Easier</text>

            <g class="pcb">
              {#each arms as [x, y, a]}
                <g transform="translate({x} {y}) rotate({a}) translate(-69 -12) scale(.33333)">
                  <path d="M78 36h258v582H78z" fill="#680000" />
                  <path d="M84 42h246v463H84z" fill="#f00" />
                  <path d="M78 618V36h258v582" fill="none" stroke="#807000" stroke-width="4" stroke-dasharray="10 7" />
                </g>
              {/each}
              <g transform="translate(910 390) scale(.33333)">
                <polygon points={outline} fill="#f00" stroke="#807000" stroke-width="3" stroke-dasharray="10 8" />
                {#each blobs.split('|') as p}<polygon points={p} fill="#00f" />{/each}
                {#each blacks.split('|') as p}<polygon points={p} fill="#000" />{/each}
                {#each parts as [x, y, w, h], i}<rect {x} {y} width={w} height={h} fill={i % 3 ? '#00f' : '#f00'} stroke={i % 3 ? '#600060' : '#00f'} stroke-width="3" />{/each}
                <path d={boardTraces} class="halo" />
                <path d={boardTraces} class="trace" />
                {#each range(37) as i}
                  <path d="M{326 + i * 8} 360v27M{326 + i * 8} 690v27M286 {406 + i * 7.500}h32M616 {400 + i * 7.500}h30" class="lead" />
                {/each}
                <path d={chipTraces} class="halo" />
                <path d={chipTraces} class="trace" />
                {#each range(8) as i}
                  <path d="M{265 + (i % 2) * 8} {175 + i * 11}h12M{362 + (i % 2) * 8} {210 + i * 7}h12M{170 + (i % 2) * 8} {398 + (i % 4) * 6}h10" class="trace thin" />
                  <path d="M130 {507 + i * 7}h30" class="trace" />
                {/each}
                {#each boardVias as [x, y]}<circle cx={x} cy={y} r="4" class="hole" />{/each}
                <path class="ink" d="M320 391h294v295H320zM332 184h48v106h-48zM458 199h159v78H458zM748 415h343v252H748zM136 418h79v42h-79zM283 733h70v72h-70zM330 97h62v27h-62z" />
                <path class="ink bold" d="M748 416h343M748 665h343" />
                {#each range(7) as i}<rect x="696" y={112 + i * 30} width="62" height="28" class="ink" /><rect x="706" y={116 + i * 30} width="42" height="20" fill="#f00" stroke="#00f" stroke-width="4" />{/each}
                <circle cx="334" cy="408" r="7" fill="#ff0" />
                <path d="M88 512h34v54H88z" class="trace" />
                <path d="M96 490h18v20H96zM96 566h18v20H96z" fill="#009090" />
                <path d="M90 468h32v20H90zM90 588h32v20H90z" fill="#c0c0c0" stroke="#300000" stroke-width="3" />
                {#each holes as [x, y, r]}<circle cx={x} cy={y} {r} fill="#009090" stroke="#400000" stroke-width="3" />{/each}
                {#each rings as [x, y]}<circle cx={x} cy={y} r="18" fill="#c0c0c0" /><circle cx={x} cy={y} r="9" fill="#009090" />{/each}
                {#each jackPins as [x, y]}<circle cx={x} cy={y} r="14" class="rim" /><circle cx={x} cy={y} r="9" class="pin" />{/each}
                {#each [476, 516, 555, 596] as x}<circle cx={x} cy="218" r="9" class="pin" /><circle cx={x} cy="257" r="9" class="pin" />{/each}
                <circle cx="156" cy="440" r="9" class="pin" /><path d="M184 429h23v23h-23zM584 207h24v23h-24zM807 599h24v24h-24z" fill="#c0c0c0" />
                <circle cx="195" cy="440" r="6" fill="#009090" /><circle cx="596" cy="218" r="6" fill="#009090" /><circle cx="819" cy="611" r="6" fill="#009090" />
                <circle cx="151" cy="504" r="7" class="pin" /><circle cx="151" cy="573" r="7" class="pin" />
                <path d="M650 785h38v38h-38z" fill="#f00" stroke="#00f" stroke-width="4" stroke-dasharray="4 3" />
                <g class="cross"><circle cx="537" cy="540" r="60" /><path d="M478 481l118 118M596 481L478 599" /></g>
                {#each silk as [x, y, t, w, s]}<text class="silk" {x} {y} font-size={s ?? 19} textLength={w} lengthAdjust="spacingAndGlyphs">{t}</text>{/each}
                {#each silkV as [x, y, t, w]}<text class="silk" transform="translate({x} {y}) rotate(-90)" font-size="19" textLength={w} lengthAdjust="spacingAndGlyphs">{t}</text>{/each}
                <text class="silk" transform="translate(228 940) rotate(28)" font-size="34" textLength="84" lengthAdjust="spacingAndGlyphs">v1.0</text>
                <text class="top" transform="translate(702 1027) rotate(-30)" font-size="34" textLength="66" lengthAdjust="spacingAndGlyphs">TOP</text>
                <circle cx="405" cy="43" r="6" fill="#f0f" />
              </g>
              {#each arms as [x, y, a], n}
                <g transform="translate({x} {y}) rotate({a}) translate(-69 -12) scale(.33333)">
                  <path d="M125 400l38 0v50l-14-10-18 8z" fill="#680000" />
                  <path d={armTraces} class="trace slim" />
                  <path d="M170 52v64h-28M228 116h28V52" fill="none" stroke="#7000c0" stroke-width="3" stroke-dasharray="22 8" />
                  <circle cx="107" cy="153" r="20" fill="#806000" /><circle cx="304" cy="153" r="20" fill="#806000" />
                  {#each armVias as [vx, vy]}<circle cx={vx} cy={vy} r="4.500" class="hole" />{/each}
                  <path class="ink" d="M172 244h55v154h-55zM145 191h13v44h-13zM227 190h12v12M248 212h12M165 460v-40h12M238 465v16h-16M278 270h10" />
                  <circle cx="190" cy="261" r="8" fill="#ff0" />
                  <path d="M84 505h246v110H84z" fill="#680000" />
                  {#each armPins as px, k}
                    <path d="M{px} 500v30l18 22v40l-14 18v25" fill="none" stroke="#f00" stroke-width="4" />
                    <path d="M{px - 18} 530l22 28 10 30" fill="none" stroke={k % 2 ? '#00f' : '#f00'} stroke-width="6" />
                    {#if n % 3}<path d="M{px - 16} 622l32 28v40" fill="none" stroke="#00f" stroke-width="12" />{:else}<path d="M{px} 640l18 22v36" fill="none" stroke="#00f" stroke-width="5" />{/if}
                    <path d="M{px - 18} 598h24M{px - 18} 608h24" stroke="#009090" stroke-width="5" stroke-dasharray="5 5" />
                    {#each [526, 567, 636, 676] as py}<circle cx={px} cy={py} r="14" class="rim" /><circle cx={px} cy={py} r="9" class="pin" />{/each}
                  {/each}
                  <path d="M108 555h24v24h-24zM108 664h24v24h-24z" fill="#c0c0c0" />
                  <path d="M114 561h12v12h-12zM114 670h12v12h-12z" fill="#009090" />
                  <path class="ink" d="M100 506h199v80H100zM100 617h199v79H100z" />
                  {#each [[80, 536, '2', 16], [84, 577, '1', 12], [302, 536, '10', 34], [303, 577, '9', 15], [78, 646, '2', 18], [84, 686, '1', 12], [302, 646, '10', 36], [303, 686, '9', 16]] as [tx, ty, t, w]}
                    <text class="silk" x={tx} y={ty} font-size="32" textLength={w} lengthAdjust="spacingAndGlyphs">{t}</text>
                  {/each}
                  <text class="silk" transform="translate(313 498) rotate(-90)" font-size="40" textLength="84" lengthAdjust="spacingAndGlyphs">TDA{n + 1}</text>
                </g>
              {/each}
              {#each armLabels as [x, y, t]}<text class="armlabel" {x} {y} textLength="28" lengthAdjust="spacingAndGlyphs">{t}</text>{/each}
            </g>
          </svg>
        </div>
        <div class="layers">
          <span class="ls"><i></i><em>LS</em></span>
          <span class="arrows"><b class="larr"></b><b class="rarr"></b></span>
          {#each layers as [t, c, w, cell], i}
            <span class="layer" class:active={i === 0} style:width="{cell}px"><i style:background={c}></i><span use:fit={w}>{t}</span></span>
          {/each}
          <span class="lbtn ico"><svg viewBox="0 0 30 18"><circle cx="5" cy="4.500" r="3" fill="#ffffb0" stroke="#aaa830" stroke-width="1.300" /><circle cx="5" cy="13.500" r="3" fill="#ffffb0" stroke="#aaa830" stroke-width="1.300" /><path d="M11 5l5 4-5 4z" fill="#4b9be8" stroke="#246ab5" /><path d="M18 5h9l-3.500 4v5l-2-1V9z" fill="#a7c5e8" stroke="#5b7da8" /></svg></span>
          <span class="lbtn snap"><span use:fit={26}>Snap</span></span>
          <span class="lbtn mask"><span use:fit={55}>Mask Level</span></span>
          <span class="lbtn clear"><span use:fit={26}>Clear</span></span>
        </div>
      </section>

      <aside class="side">
        {#each sideTabs as [t, w, cell]}<span class="stab" style:height="{cell}px"><svg viewBox="0 0 20 {cell}" height={cell} width="20"><text transform="translate(5.500 5) rotate(90)" textLength={w} lengthAdjust="spacing">{t}</text></svg></span>{/each}
      </aside>
    </div>

    <footer class="status">
      <div class="coords"><span use:fit={130}>X:-133.9mm Y:-103.145mm</span><span class="gridinfo" use:fit={73}>Grid: 0.005mm</span><span class="hot" use:fit={77}>(Hotspot Snap)</span></div>
      <div class="mid"></div>
      <div class="sbuttons">
        {#each buttons as [u, t, w, cell]}<span class="sbtn" style:width="{cell}px"><span use:fit={w}><u>{u}</u>{t}</span></span>{/each}
        <span class="sbtn more">&gt;&gt;</span>
      </div>
    </footer>
    <div class="taskbar">
      <span class="start"><i></i></span>
      {#each taskColors as c}<span class="task"><i style:background={c}></i></span>{/each}
      <span class="peek"></span>
    </div>
  </main>
</div>

<style>
  :global(body) { margin: 0; overflow: hidden; }
  .screen { width: 1928px; height: 1168px; display: flex; font: 12px/16px "Open Sans", "Noto Sans", sans-serif; color: #111; overflow: hidden; background: #aaa; }
  .screen :global(*) { box-sizing: border-box; }
  span, h1, strong { white-space: nowrap; }
  .desktop { width: 8px; flex: none; background: linear-gradient(#000 176px, #00408f 176px, #0055b5 500px, #0070e0); }
  .app { width: 1920px; display: flex; flex-direction: column; }
  .icon { width: 18px; height: 18px; flex: none; display: block; overflow: visible; }
  .letter { font: bold 19px "Liberation Serif", serif; fill: #4a78c8; }

  .titlebar { height: 22px; flex: none; display: flex; align-items: center; background: linear-gradient(#b5cfe6, #a2b5c8 35%, #8899ab 90%); border-bottom: 2px solid #3f4551; }
  .logo { width: 15px; height: 15px; margin-left: 1px; flex: none; }
  h1 { font-size: 12px; font-weight: 400; margin: 1px 0 0 5px; color: #000; text-shadow: 0 0 6px #fff, 0 0 8px #eee, 0 0 10px #ddd; }
  .winbtns { margin-left: auto; margin-right: 3px; align-self: flex-start; display: flex; height: 18px; border: 1px solid #4f5c6c; border-top: 0; border-radius: 0 0 4px 4px; box-shadow: inset 0 0 0 1px #c4d2e0; }
  .winbtns span { width: 27px; display: flex; align-items: center; justify-content: center; border-right: 1px solid #4f5c6c; background: linear-gradient(#aec0d3, #8193a8); }
  .winbtns .close { width: 47px; border: 0; }
  .winbtns svg { width: 14px; height: 12px; }

  .bar { display: flex; align-items: center; background: #f0f0f0; flex: none; }
  .menubar { height: 26px; }
  .toolbar { height: 26px; }
  .grip { width: 3px; height: 16px; margin: 0 0 0 3px; flex: none; background: repeating-linear-gradient(#999 0 1px, #f0f0f0 1px 3px); }
  .dxp { width: 25px; padding-left: 5px; }
  .dxp .icon { width: 17px; height: 17px; }
  .menu { flex: none; }
  u { text-decoration: underline; text-underline-offset: 2px; }
  .menubar .grip.wide { margin: 0 3px 0 0; }
  .combo { height: 19px; background: #fff; display: flex; align-items: center; flex: none; padding-left: 2px; }
  .drop { margin-left: auto; width: 10px; height: 100%; background: #f2f2f2; display: flex; align-items: center; justify-content: center; }
  .drop b, .tri { width: 0; height: 0; border: 3px solid transparent; border-top: 4px solid #000; border-bottom: 0; flex: none; }
  .tri.dim { border-top-color: #999; }
  .tri.big { border-width: 4px 4px 0; }
  .address { width: 199px; }
  .nav { display: flex; align-items: center; margin-left: 3px; }
  .nav .tri { margin: 0 3px 0 4px; }
  .nav .tri + .icon + .icon { margin-left: 4px; }
  .utils { margin-left: auto; display: flex; align-items: center; width: 232px; }
  .util { width: 37px; display: flex; align-items: center; padding-left: 2px; gap: 8px; flex: none; }
  .toolbar .grip:first-child { margin-right: 0; }
  .group { display: flex; height: 22px; padding-right: 4px; border-right: 1px solid #999; flex: none; }
  .tool { width: 23px; height: 22px; flex: none; display: flex; align-items: center; justify-content: center; }
  .view { width: 148px; margin-left: 3px; }
  .toolbar .grip.first { margin: 0 1px 0 5px; }
  .toolbar .grip.second { margin: 0 3px 0 7px; }
  .variation { width: 123px; }
  .filter { display: flex; align-items: center; margin-left: auto; margin-right: 4px; }
  .f1 { width: 88px; margin-left: 2px; }
  .f2 { width: 169px; margin-left: 2px; }

  .work { flex: none; height: 1059px; display: flex; background: #a9a9a9; }
  .panel { width: 324px; margin: 3px 0 0 3px; height: 1056px; background: #dcdcdc; display: flex; flex-direction: column; flex: none; }
  .phead { height: 23px; background: linear-gradient(#b5d1e6, #9fc2dc); display: flex; align-items: center; justify-content: space-between; padding: 0 6px 0 5px; flex: none; }
  .phead span { display: flex; align-items: center; gap: 7px; }
  .phead svg { width: 9px; height: 10px; }
  .form { padding: 10px 10px 0; display: flex; flex-direction: column; gap: 3px; height: 93px; flex: none; }
  .line { display: flex; gap: 3px; height: 25px; align-items: stretch; }
  .field { width: 233px; border: 1px solid #8a8a8a; background: #f3f3f3; padding: 0 4px; display: flex; align-items: center; }
  .field .drop { height: 16px; width: 14px; }
  .field .drop b { border-width: 5px 4px 0; }
  button { font: inherit; width: 68px; padding: 0; border: 1px solid #777; border-radius: 3px; background: linear-gradient(#f6f6f6 45%, #dedede 50%, #d0d0d0); display: flex; align-items: center; justify-content: center; color: inherit; }
  .modes { align-items: center; height: 23px; gap: 0; padding-top: 1px; }
  .radio { width: 12px; height: 12px; border: 1px solid #888; border-radius: 50%; background: #f4f4f4; margin-right: 4px; }
  .radio.on { background: radial-gradient(#9be2fa 10%, #145a8a 38%, #fff 50%); }
  .radio.second { margin-left: 11px; }
  .sm { width: 28px; height: 21px; margin-left: auto; }
  .split { width: 35px; margin-left: 5px; }
  .split em { height: 14px; width: 1px; background: #999; margin: 0 3px 0 1px; }
  .tree { margin: 0 10px 0 11px; height: 912px; border: 1px solid #888; background: #fff; padding-top: 5px; display: flex; flex-direction: column; flex: none; }
  .row { height: 16px; display: flex; align-items: center; margin-right: 4px; flex: none; }
  .row .icon { width: 16px; height: 16px; margin: 0 1px 0 1px; }
  .exp { width: 9px; height: 9px; border: 1px solid #777; margin-right: 1px; flex: none; background: linear-gradient(#000, #000) center / 5px 1px no-repeat; }
  .exp.plus { background: linear-gradient(#000, #000) center / 5px 1px no-repeat, linear-gradient(#000, #000) center / 1px 5px no-repeat; }
  .exp.none { visibility: hidden; }
  .cell { flex: 1; height: 16px; border-bottom: 1px solid #e0e0e0; padding-left: 2px; line-height: 16px; min-width: 0; }
  .col { width: 18px; height: 16px; border-left: 1px solid #e0e0e0; border-bottom: 1px solid #e0e0e0; }
  .row .col .icon { width: 15px; height: 15px; margin: 0; }
  .col.last { border-right: 1px solid #e0e0e0; }
  .root .cell { background: #99b4d1; font-weight: 600; border: 0; color: #000; }
  .selected .cell, .selected .col { background: #3399ff; color: #fff; border-color: #3399ff; }
  .selected .col.last { border-left-color: #66b3ff; }
  .ptabs { display: flex; height: 20px; margin-top: 8px; background: #efefef; flex: none; overflow: hidden; }
  .arrows { width: 38px; display: flex; align-items: center; gap: 13px; padding-left: 7px; flex: none; border-right: 1px solid #bbb; }
  .larr, .rarr { width: 0; height: 0; border: 4px solid transparent; }
  .larr { border-right-color: #999; border-left: 0; }
  .rarr { border-left-color: #000; border-right: 0; }
  .ptab { height: 19px; flex: none; background: #fcfcfc; border: 1px solid #bbb; border-left: 0; border-top: 0; border-radius: 0 0 3px 0; color: #666; display: flex; justify-content: center; align-items: center; overflow: hidden; padding: 1px 0 0 1px; }
  .ptab.active { background: #dcdcdc; color: #000; }
  .ptab:last-child { justify-content: flex-start; padding-left: 6px; }

  .editor { width: 1559px; margin-left: 3px; display: flex; flex-direction: column; flex: none; }
  .doctabs { height: 30px; padding-top: 3px; display: flex; border-bottom: 3px solid #dcdcdc; padding-left: 4px; flex: none; }
  .dtab { flex: none; display: flex; align-items: center; gap: 4px; color: #fff; padding-left: 0; }
  .dtab .icon { width: 17px; height: 16px; }
  .dtab.active { background: #dcdcdc; color: #000; padding-left: 4px; }
  .dtab.active ~ .dtab { padding-left: 4px; }
  .canvas { height: 1009px; background: #6e6a69; padding-left: 17px; flex: none; }
  .sheet { width: 1527px; height: 1009px; display: block; }
  .frame { fill: none; stroke: #000; }
  .mark { font: 300 14.500px Roboto, "Liberation Sans", sans-serif; text-anchor: middle; }
  .note { font-family: Roboto, "Liberation Sans", sans-serif; font-weight: 300; }
  .heavy { font-family: "DejaVu Sans Mono", monospace; font-weight: 400; }
  .brand { font: italic 900 35px Lato, sans-serif; fill: #fff; }
  .tag { font: 8px "Liberation Sans", sans-serif; fill: #fff; }
  .pcb { shape-rendering: crispEdges; }
  .halo { fill: none; stroke: #90002a; stroke-width: 6.500; }
  .trace { fill: none; stroke: #00f; stroke-width: 4.500; }
  .trace.slim { stroke-width: 3.500; }
  .trace.thin { stroke: #999; stroke-dasharray: 4 4; }
  .lead { stroke: #1010e0; stroke-width: 4; }
  .hole { fill: #c0c0c0; stroke: #603030; stroke-width: 3; }
  .rim { fill: #70003a; }
  .pin { fill: #009090; stroke: #c0c0c0; stroke-width: 6; }
  .ink { fill: none; stroke: #ff0; stroke-width: 3; }
  .ink.bold { stroke-width: 5; }
  .silk { font-family: "Liberation Mono", monospace; fill: #ff0; stroke: #ff0; stroke-width: .5; }
  .top { font-family: "Liberation Mono", monospace; font-weight: bold; fill: #c00000; }
  .cross { fill: none; stroke: #00e0e8; stroke-width: 3; }
  .armlabel { font: 11.500px "Liberation Sans", sans-serif; fill: #ffe4e4; }

  .layers { height: 20px; display: flex; background: #efefef; flex: none; overflow: hidden; }
  .ls { display: flex; width: 51px; padding: 3px 0 3px 3px; flex: none; }
  .ls i { width: 25px; background: #f00; border: 1px solid #666; }
  .ls em { font-style: normal; width: 21px; border: 1px solid #999; color: #888; background: #ddd; line-height: 13px; text-align: center; }
  .layers .arrows { width: 39px; padding-left: 9px; }
  .layer { height: 19px; flex: none; background: #fff; border-right: 1px solid #bbb; border-bottom: 1px solid #bbb; display: flex; align-items: center; padding: 1px 0 0 7px; gap: 5px; overflow: hidden; color: #000; }
  .layer i { width: 10px; height: 10px; border: 1px solid #999; flex: none; margin-top: -1px; }
  .layer.active { background: #dcdcdc; font-weight: 600; }
  .lbtn { flex: none; border: 1px solid #ccc; background: #f3f3f3; color: #777; display: flex; align-items: center; justify-content: center; height: 19px; padding-top: 1px; }
  .ico { width: 33px; background: #e9e9e9; }
  .ico svg { width: 30px; height: 18px; }
  .snap { width: 34px; }
  .mask { width: 65px; }
  .clear { width: 35px; }

  .side { width: 25px; margin: 3px 0 0 3px; background: #f0f0f0; padding: 1px 0 0 3px; display: flex; flex-direction: column; gap: 1px; flex: none; }
  .stab { width: 20px; border: 1px solid #ddd; background: #fbfbfb; display: flex; flex: none; }
  .stab svg { display: block; margin: -1px; }
  .stab text { font-size: 12px; fill: #666; }

  .status { height: 28px; flex: none; border-top: 3px solid #a9a9a9; box-shadow: inset 0 1px #666, inset 0 3px #ccc; background: #f0f0f0; display: flex; align-items: center; padding-top: 2px; }
  .coords { display: flex; width: 486px; height: 18px; border-right: 1px solid #999; padding-left: 5px; }
  .gridinfo { margin-left: 12px; }
  .hot { margin-left: 21px; }
  .mid { width: 486px; height: 18px; border-right: 1px solid #999; }
  .sbuttons { display: flex; margin-left: auto; margin-right: 4px; }
  .sbtn { height: 18px; border: 1px solid #c8c8c8; border-left-width: 0; background: #fafafa; color: #666; display: flex; align-items: center; justify-content: center; flex: none; }
  .sbtn:first-child { border-left-width: 1px; }
  .more { width: 18px; border-left-width: 1px; margin-left: 5px; font-size: 9px; }
  .taskbar { height: 8px; flex: none; display: flex; align-items: stretch; border-top: 1px solid #274e7d; background: linear-gradient(90deg, #12457c 0, #2b8fcb 630px, #4295d6 900px, #1c66b5 1100px, #2066b8 1380px, #6ba7e0 1395px, #1c5ba8 1420px, #12335f 1850px); overflow: hidden; gap: 3px; }
  .start { width: 57px; padding-left: 12px; }
  .start i { display: block; width: 26px; height: 20px; margin-top: 2px; border-radius: 50%; background: #9eb6ca; }
  .task { width: 59px; border: 1px solid #bfe2f2; border-bottom: 0; background: linear-gradient(100deg, #9ed0e8, #4e9cc8 60%, #7bbbe0); display: flex; justify-content: center; }
  .task i { width: 27px; margin-top: 3px; border-radius: 3px 3px 0 0; }
  .peek { width: 13px; margin-left: auto; border: 1px solid #8ba5c0; background: #455f80; }
</style>
